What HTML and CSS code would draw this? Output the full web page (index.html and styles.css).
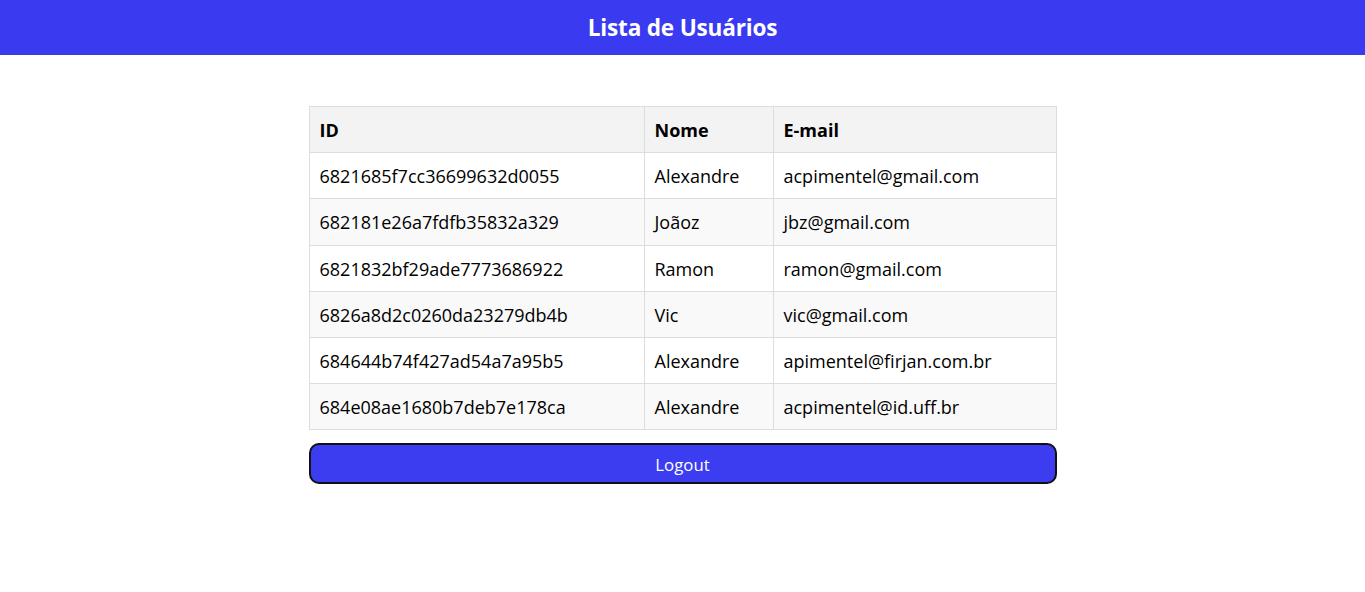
FILE: index.html
```html
<!DOCTYPE html>
<html lang="pt-BR">
<head>
<meta charset="utf-8">
<title>Lista de Usuários</title>
<link rel="stylesheet" href="styles.css">
</head>
<body>
<header class="topbar"><h1 class="title">Lista de Usuários</h1></header>
<main class="content">
  <table class="users">
    <colgroup>
      <col class="col-id"><col class="col-name"><col class="col-email">
    </colgroup>
    <thead>
      <tr><th>ID</th><th>Nome</th><th>E-mail</th></tr>
    </thead>
    <tbody>
      <tr><td>6821685f7cc36699632d0055</td><td>Alexandre</td><td>acpimentel@gmail.com</td></tr>
      <tr><td>682181e26a7fdfb35832a329</td><td>Joãoz</td><td>jbz@gmail.com</td></tr>
      <tr><td>6821832bf29ade7773686922</td><td>Ramon</td><td>ramon@gmail.com</td></tr>
      <tr><td>6826a8d2c0260da23279db4b</td><td>Vic</td><td>vic@gmail.com</td></tr>
      <tr><td>684644b74f427ad54a7a95b5</td><td>Alexandre</td><td>apimentel@firjan.com.br</td></tr>
      <tr><td>684e08ae1680b7deb7e178ca</td><td>Alexandre</td><td>acpimentel@id.uff.br</td></tr>
    </tbody>
  </table>
  <button class="logout" type="button">Logout</button>
</main>
</body>
</html>
```
FILE: styles.css
```css
* { box-sizing: border-box; }
html, body { margin: 0; padding: 0; background: #fff; }
body {
  font-family: "Open Sans", "Noto Sans", "Liberation Sans", sans-serif;
  color: #000;
}
.topbar {
  background: #3a3af1;
  height: 55px;
  display: flex;
  align-items: center;
  justify-content: center;
}
.title {
  margin: 0;
  color: #fff;
  font-size: 22.6px;
  font-weight: 700;
  letter-spacing: -0.2px;
}
.content {
  width: 748px;
  margin: 51px auto 0;
  display: flex;
  flex-direction: column;
  align-items: flex-start;
  gap: 13px;
}
.users {
  width: 747px;
  border-collapse: collapse;
  table-layout: fixed;
  font-size: 18px;
}
.col-id { width: 335px; }
.col-name { width: 129px; }
.col-email { width: 283px; }
.users th, .users td {
  border: 1px solid #dddddd;
  height: 46.2px;
  padding: 1px 10px 0;
  text-align: left;
  vertical-align: middle;
  white-space: nowrap;
}
.users th {
  background: #f3f3f3;
  font-weight: 700;
}
.users tbody tr:nth-child(even) td { background: #f9f9f9; }
.users tbody tr:nth-child(odd) td { background: #ffffff; }
.logout {
  width: 748px;
  height: 41px;
  padding-top: 2px;
  background: #3c3cf0;
  color: #fff;
  border: 2px solid #111;
  border-radius: 10px;
  font-family: inherit;
  font-size: 16.8px;
  cursor: pointer;
}
```
